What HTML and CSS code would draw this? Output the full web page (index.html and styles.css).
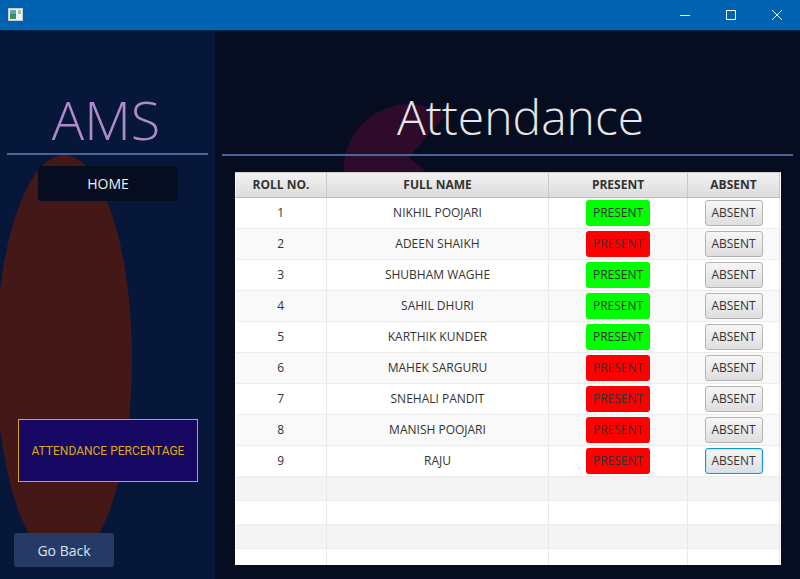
FILE: index.html
```html
<!DOCTYPE html>
<html>
<head>
<meta charset="utf-8">
<link rel="stylesheet" href="styles.css">
</head>
<body>
<div class="window">
  <div class="titlebar">
    <svg class="app-icon" width="16" height="14" viewBox="0 0 16 14">
      <rect x="0.5" y="0.5" width="14" height="12" fill="#f2f2f2" stroke="#c9c9c9"/>
      <rect x="2" y="2" width="6" height="9" fill="#3d8f6a"/>
      <rect x="2" y="2" width="6" height="4" fill="#5fa0c8"/>
      <rect x="10" y="2" width="3" height="4" fill="#9cc8a8"/>
    </svg>
    <div class="controls">
      <svg class="ctl" width="46" height="31" viewBox="0 0 46 31"><line x1="18" y1="15.5" x2="28" y2="15.5" stroke="#fff" stroke-width="1"/></svg>
      <svg class="ctl" width="46" height="31" viewBox="0 0 46 31"><rect x="18.5" y="10.5" width="9" height="9" fill="none" stroke="#fff" stroke-width="1"/></svg>
      <svg class="ctl" width="46" height="31" viewBox="0 0 46 31"><path d="M18 10 L28 20 M28 10 L18 20" stroke="#fff" stroke-width="1"/></svg>
    </div>
  </div>
  <div class="app">
    <aside class="sidebar">
      <div class="blob"></div>
      <h1 class="brand">AMS</h1>
      <div class="rule side-rule"></div>
      <div class="home-btn">HOME</div>
      <div class="percent-btn">ATTENDANCE PERCENTAGE</div>
      <div class="back-btn">Go Back</div>
    </aside>
    <main class="main">
      <svg class="pac" width="585" height="548" viewBox="215 31 585 548">
        <path d="M409 157 L446 115 A66 66 0 1 0 465 206 Z" fill="#2e0b2b"/>
      </svg>
      <h2 class="title">Attendance</h2>
      <div class="rule main-rule"></div>
      <div class="table-wrap">
        <table class="grid">
          <colgroup>
            <col class="c-roll"><col class="c-name"><col class="c-pres"><col class="c-abs"><col class="c-pad">
          </colgroup>
          <thead>
            <tr><th>ROLL NO.</th><th>FULL NAME</th><th>PRESENT</th><th>ABSENT</th><th class="pad"></th></tr>
          </thead>
          <tbody>
            <tr><td>1</td><td>NIKHIL POOJARI</td><td><span class="pbtn green">PRESENT</span></td><td><span class="abtn">ABSENT</span></td><td class="pad"></td></tr>
            <tr><td>2</td><td>ADEEN SHAIKH</td><td><span class="pbtn red">PRESENT</span></td><td><span class="abtn">ABSENT</span></td><td class="pad"></td></tr>
            <tr><td>3</td><td>SHUBHAM WAGHE</td><td><span class="pbtn green">PRESENT</span></td><td><span class="abtn">ABSENT</span></td><td class="pad"></td></tr>
            <tr><td>4</td><td>SAHIL DHURI</td><td><span class="pbtn green">PRESENT</span></td><td><span class="abtn">ABSENT</span></td><td class="pad"></td></tr>
            <tr><td>5</td><td>KARTHIK KUNDER</td><td><span class="pbtn green">PRESENT</span></td><td><span class="abtn">ABSENT</span></td><td class="pad"></td></tr>
            <tr><td>6</td><td>MAHEK SARGURU</td><td><span class="pbtn red">PRESENT</span></td><td><span class="abtn">ABSENT</span></td><td class="pad"></td></tr>
            <tr><td>7</td><td>SNEHALI PANDIT</td><td><span class="pbtn red">PRESENT</span></td><td><span class="abtn">ABSENT</span></td><td class="pad"></td></tr>
            <tr><td>8</td><td>MANISH POOJARI</td><td><span class="pbtn red">PRESENT</span></td><td><span class="abtn">ABSENT</span></td><td class="pad"></td></tr>
            <tr><td>9</td><td>RAJU</td><td><span class="pbtn red">PRESENT</span></td><td><span class="abtn focused">ABSENT</span></td><td class="pad"></td></tr>
            <tr class="empty"><td></td><td></td><td></td><td></td><td class="pad"></td></tr>
            <tr class="empty"><td></td><td></td><td></td><td></td><td class="pad"></td></tr>
            <tr class="empty"><td></td><td></td><td></td><td></td><td class="pad"></td></tr>
            <tr class="empty"><td></td><td></td><td></td><td></td><td class="pad"></td></tr>
          </tbody>
        </table>
      </div>
    </main>
  </div>
</div>
</body>
</html>
```
FILE: styles.css
```css
* { box-sizing: border-box; }
html, body { margin: 0; padding: 0; }
body {
  width: 800px;
  height: 579px;
  overflow: hidden;
  font-family: "Open Sans", "Noto Sans", sans-serif;
  background: #060d20;
}
.window { width: 800px; height: 579px; display: flex; flex-direction: column; }
.titlebar {
  height: 31px;
  flex: none;
  background: #0063b1;
  border-bottom: 1px solid #0a2546;
  display: flex;
  align-items: center;
  justify-content: space-between;
}
.app-icon { margin-left: 8px; margin-top: -1px; display: block; }
.controls { display: flex; height: 30px; align-items: flex-start; }
.ctl { display: block; }
.app { flex: 1; display: flex; min-height: 0; }

.sidebar {
  position: relative;
  width: 215px;
  flex: none;
  background: #071739;
  overflow: hidden;
  display: flex;
  flex-direction: column;
}
.blob {
  position: absolute;
  left: -4px;
  top: 124px;
  width: 136px;
  height: 408px;
  border-radius: 50%;
  background: #451818;
}
.brand {
  position: relative;
  margin: 56px 0 0 -3px;
  height: 64px;
  line-height: 64px;
  text-align: center;
  font-size: 54px;
  font-weight: 300;
  color: #b08bcb;
}
.rule { height: 2px; background: #4a6698; position: relative; }
.side-rule { margin: 2px 7px 0 7px; }
.home-btn {
  position: relative;
  margin: 11px 0 0 38px;
  width: 140px;
  height: 35px;
  border-radius: 3px;
  background: #060d20;
  color: #eaf2fa;
  font-size: 14px;
  display: flex;
  align-items: center;
  justify-content: center;
}
.percent-btn {
  position: relative;
  margin: 218px 0 0 18px;
  width: 180px;
  height: 63px;
  background: #170864;
  border: 1px solid #d9a522;
  color: #deaa1c;
  font-family: Roboto, "Liberation Sans", sans-serif;
  font-size: 12px;
  display: flex;
  align-items: center;
  justify-content: center;
}
.back-btn {
  position: relative;
  margin: 51px 0 0 14px;
  width: 100px;
  height: 34px;
  border-radius: 3px;
  background: #263a66;
  color: #d6e4f2;
  font-size: 14px;
  display: flex;
  align-items: center;
  justify-content: center;
}

.main {
  position: relative;
  flex: 1;
  display: flex;
  flex-direction: column;
  overflow: hidden;
}
.pac { position: absolute; left: 0; top: 0; }
.title {
  position: relative;
  margin: 54px 0 0 26px;
  height: 64px;
  line-height: 64px;
  text-align: center;
  font-size: 48px;
  font-weight: 300;
  color: #e6e6e6;
}
.main-rule { margin: 5px 7px 0 7px; }
.table-wrap {
  position: relative;
  margin: 16px 0 0 20px;
  width: 546px;
  height: 393px;
  background: #fff;
  border-top: 1px solid #cfcfcf;
  overflow: hidden;
}
.grid {
  border-collapse: collapse;
  table-layout: fixed;
  width: 546px;
  font-size: 12px;
  color: #333;
}
.c-roll { width: 91px; }
.c-name { width: 222px; }
.c-pres { width: 139px; }
.c-abs { width: 92px; }
.c-pad { width: 2px; }
.grid th {
  height: 24px;
  padding: 0;
  font-weight: 700;
  font-size: 12px;
  color: #333;
  background: linear-gradient(#f1f1f1, #dcdcdc);
  border-right: 1px solid #c8c8c8;
  border-left: 1px solid #fafafa;
  border-bottom: 1px solid #bdbdbd;
  text-align: center;
}
.grid th.pad, .grid td.pad { border: none; background: #fff; }
.grid td {
  height: 31px;
  padding: 0;
  text-align: center;
  border-right: 1px solid #e9e9e9;
  border-bottom: 1px solid #ececec;
}
.grid tbody tr:nth-child(odd) td { background: #fff; }
.grid tbody tr:nth-child(even) td { background: #f9f9f9; }
.grid tbody tr.empty:nth-child(even) td { background: #f4f4f4; }
.grid tr.empty td { height: 24px; }
.pbtn {
  display: inline-flex;
  align-items: center;
  justify-content: center;
  width: 64px;
  height: 26px;
  border-radius: 3px;
  color: #333;
  font-size: 12px;
  vertical-align: middle;
}
.green { background: #00ff00; }
.red { background: #ff0000; }
.abtn {
  display: inline-flex;
  align-items: center;
  justify-content: center;
  width: 58px;
  height: 26px;
  border-radius: 3px;
  border: 1px solid #b4b4b4;
  background: linear-gradient(#f6f6f6, #dedede);
  color: #333;
  font-size: 12px;
  vertical-align: middle;
}
.abtn.focused {
  border: 1px solid #0a9bd8;
  box-shadow: inset 0 0 0 1px #bfe6f6;
}
```
